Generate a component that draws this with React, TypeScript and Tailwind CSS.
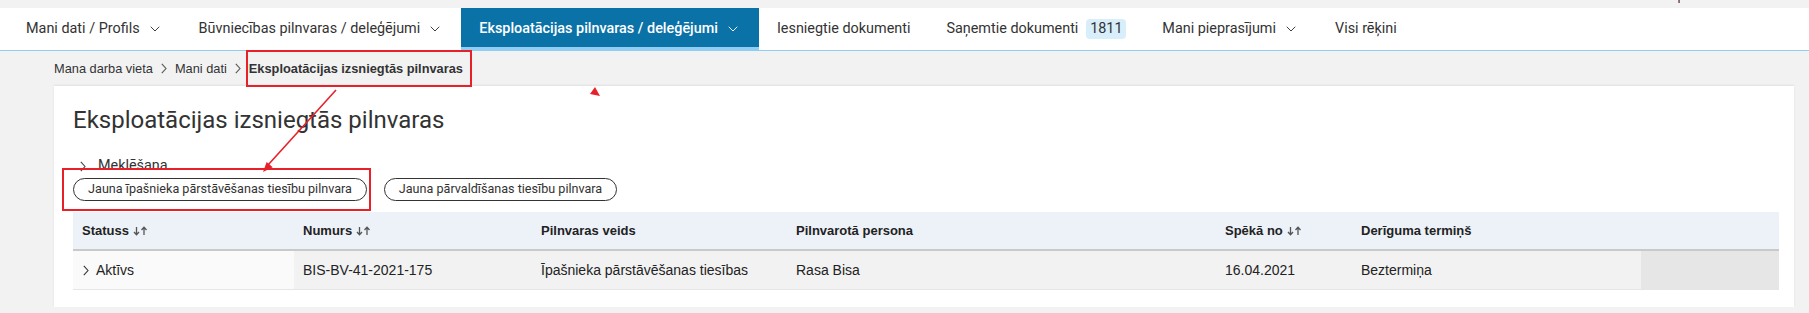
import { ChevronDown } from 'lucide-react';

const navItems = [
  { label: 'Mani dati / Profils', dropdown: true },
  { label: 'Būvniecības pilnvaras / deleģējumi', dropdown: true },
  { label: 'Eksploatācijas pilnvaras / deleģējumi', dropdown: true, active: true },
  { label: 'Iesniegtie dokumenti' },
  { label: 'Saņemtie dokumenti', badge: '1811' },
  { label: 'Mani pieprasījumi', dropdown: true },
  { label: 'Visi rēķini' },
];

const columns = [
  { title: 'Statuss', sortable: true },
  { title: 'Numurs', sortable: true },
  { title: 'Pilnvaras veids' },
  { title: 'Pilnvarotā persona' },
  { title: 'Spēkā no', sortable: true },
  { title: 'Derīguma termiņš' },
  { title: '' },
];

const Chevron = ({ className = '' }: { className?: string }) => (
  <svg width="6" height="11" viewBox="0 0 6 11" className={className}>
    <path d="M0.8 0.8 L5 5.5 L0.8 10.2" fill="none" stroke="currentColor" strokeWidth="1.1" />
  </svg>
);

const SortArrows = () => (
  <svg width="15" height="10" viewBox="0 0 15 10" className="ml-[4px] text-[#555]">
    <path d="M3.5 1 V8.5 M1 6 L3.5 8.8 L6 6" fill="none" stroke="currentColor" strokeWidth="1.3" />
    <path d="M11 9 V1.5 M8.5 4 L11 1.2 L13.5 4" fill="none" stroke="currentColor" strokeWidth="1.3" />
  </svg>
);

export default function App() {
  return (
    <div className="relative w-[1809px] h-[313px] bg-[#f2f2f2] overflow-hidden" style={{ fontFamily: 'Roboto, sans-serif' }}>
      {/* top strip */}
      <div className="h-[8px] flex">
        <div className="ml-[1678px] w-[2px] h-[3px] bg-[#e0692c] border-r border-[#3b82c4]"></div>
      </div>

      {/* main nav */}
      <nav className="h-[43px] bg-white border-b border-[#90cdf2] flex pl-[8px] text-[14.4px] text-[#333]">
        {navItems.map((item) => (
          <div
            key={item.label}
            className={
              item.active
                ? 'flex items-center px-[18px] bg-[#0b72a8] text-white font-medium shadow-[inset_0_-3px_0_#8fcdf2]'
                : 'flex items-center px-[18px]'
            }
          >
            <span>{item.label}</span>
            {item.badge && (
              <span className="ml-[8px] h-[20px] w-[40px] flex items-center justify-center rounded-[4px] bg-[#d9eefb]">
                {item.badge}
              </span>
            )}
            {item.dropdown && <ChevronDown size={16} strokeWidth={1.4} className="ml-[7px]" />}
          </div>
        ))}
      </nav>

      <div className="pl-[54px] pr-[15px]">
        {/* breadcrumb */}
        <div
          className="h-[35px] flex items-center text-[12.8px] text-[#333]"
          style={{ fontFamily: '"Liberation Sans", Arial, sans-serif' }}
        >
          <span>Mana darba vieta</span>
          <Chevron className="mx-[8px] text-[#555]" />
          <span>Mani dati</span>
          <Chevron className="mx-[8px] text-[#555]" />
          <span className="font-bold">Eksploatācijas izsniegtās pilnvaras</span>
        </div>

        {/* card */}
        <div className="bg-white shadow-[0_-1px_2px_rgba(0,0,0,0.08)] pt-[20px] pb-[17px] pl-[19px] pr-[15px]">
          <h1 className="text-[24px] leading-[28px] text-[#333]">Eksploatācijas izsniegtās pilnvaras</h1>

          <div className="mt-[23px] flex items-center h-[18px] pl-[7px] text-[14.4px] text-[#333]">
            <Chevron className="text-[#444]" />
            <span className="ml-[12px]">Meklēšana</span>
          </div>

          <div className="mt-[3px] flex gap-[17px] text-[12.6px] text-[#333]">
            <button className="h-[23px] w-[294px] rounded-full border border-[#333] bg-white">
              Jauna īpašnieka pārstāvēšanas tiesību pilnvara
            </button>
            <button className="h-[23px] w-[233px] rounded-full border border-[#333] bg-white">
              Jauna pārvaldīšanas tiesību pilnvara
            </button>
          </div>

          {/* table */}
          <div className="mt-[11px] text-[14px] text-[#222]" style={{ fontFamily: '"Liberation Sans", Arial, sans-serif' }}>
            <div className="grid grid-cols-[221px_238px_255px_429px_136px_289px_138px] h-[39px] bg-[#edf2f9] border-b-2 border-[#c9c9c9] text-[13px]">
              {columns.map((col, i) => (
                <div key={i} className="flex items-center pl-[9px] font-bold">
                  {col.title}
                  {col.sortable && <SortArrows />}
                </div>
              ))}
            </div>
            <div className="grid grid-cols-[221px_238px_255px_429px_136px_289px_138px] h-[39px] border-b border-[#e6e6e6]">
              <div className="flex items-center pl-[10px] bg-[#fafafa]">
                <Chevron className="text-[#333]" />
                <span className="ml-[7px]">Aktīvs</span>
              </div>
              <div className="flex items-center pl-[9px] bg-[#f2f2f2]">BIS-BV-41-2021-175</div>
              <div className="flex items-center pl-[9px] bg-[#f2f2f2]">Īpašnieka pārstāvēšanas tiesības</div>
              <div className="flex items-center pl-[9px] bg-[#f2f2f2]">Rasa Bisa</div>
              <div className="flex items-center pl-[9px] bg-[#f2f2f2]">16.04.2021</div>
              <div className="flex items-center pl-[9px] bg-[#f2f2f2]">Beztermiņa</div>
              <div className="bg-[#e6e6e6]"></div>
            </div>
          </div>
        </div>
      </div>

      {/* red annotations */}
      <svg className="absolute inset-0 pointer-events-none" width="1809" height="313" viewBox="0 0 1809 313">
        <rect x="247" y="51" width="224" height="35" fill="none" stroke="#e8202a" strokeWidth="2" />
        <rect x="63" y="169" width="307" height="41" fill="none" stroke="#e8202a" strokeWidth="2" />
        <line x1="336" y1="90" x2="268" y2="165" stroke="#e8202a" strokeWidth="1.6" />
        <polygon points="263,172 266.7,161.9 272.7,167.3" fill="#e8202a" />
        <polygon points="595,87 590,94 600,96" fill="#e8202a" />
      </svg>
    </div>
  );
}
